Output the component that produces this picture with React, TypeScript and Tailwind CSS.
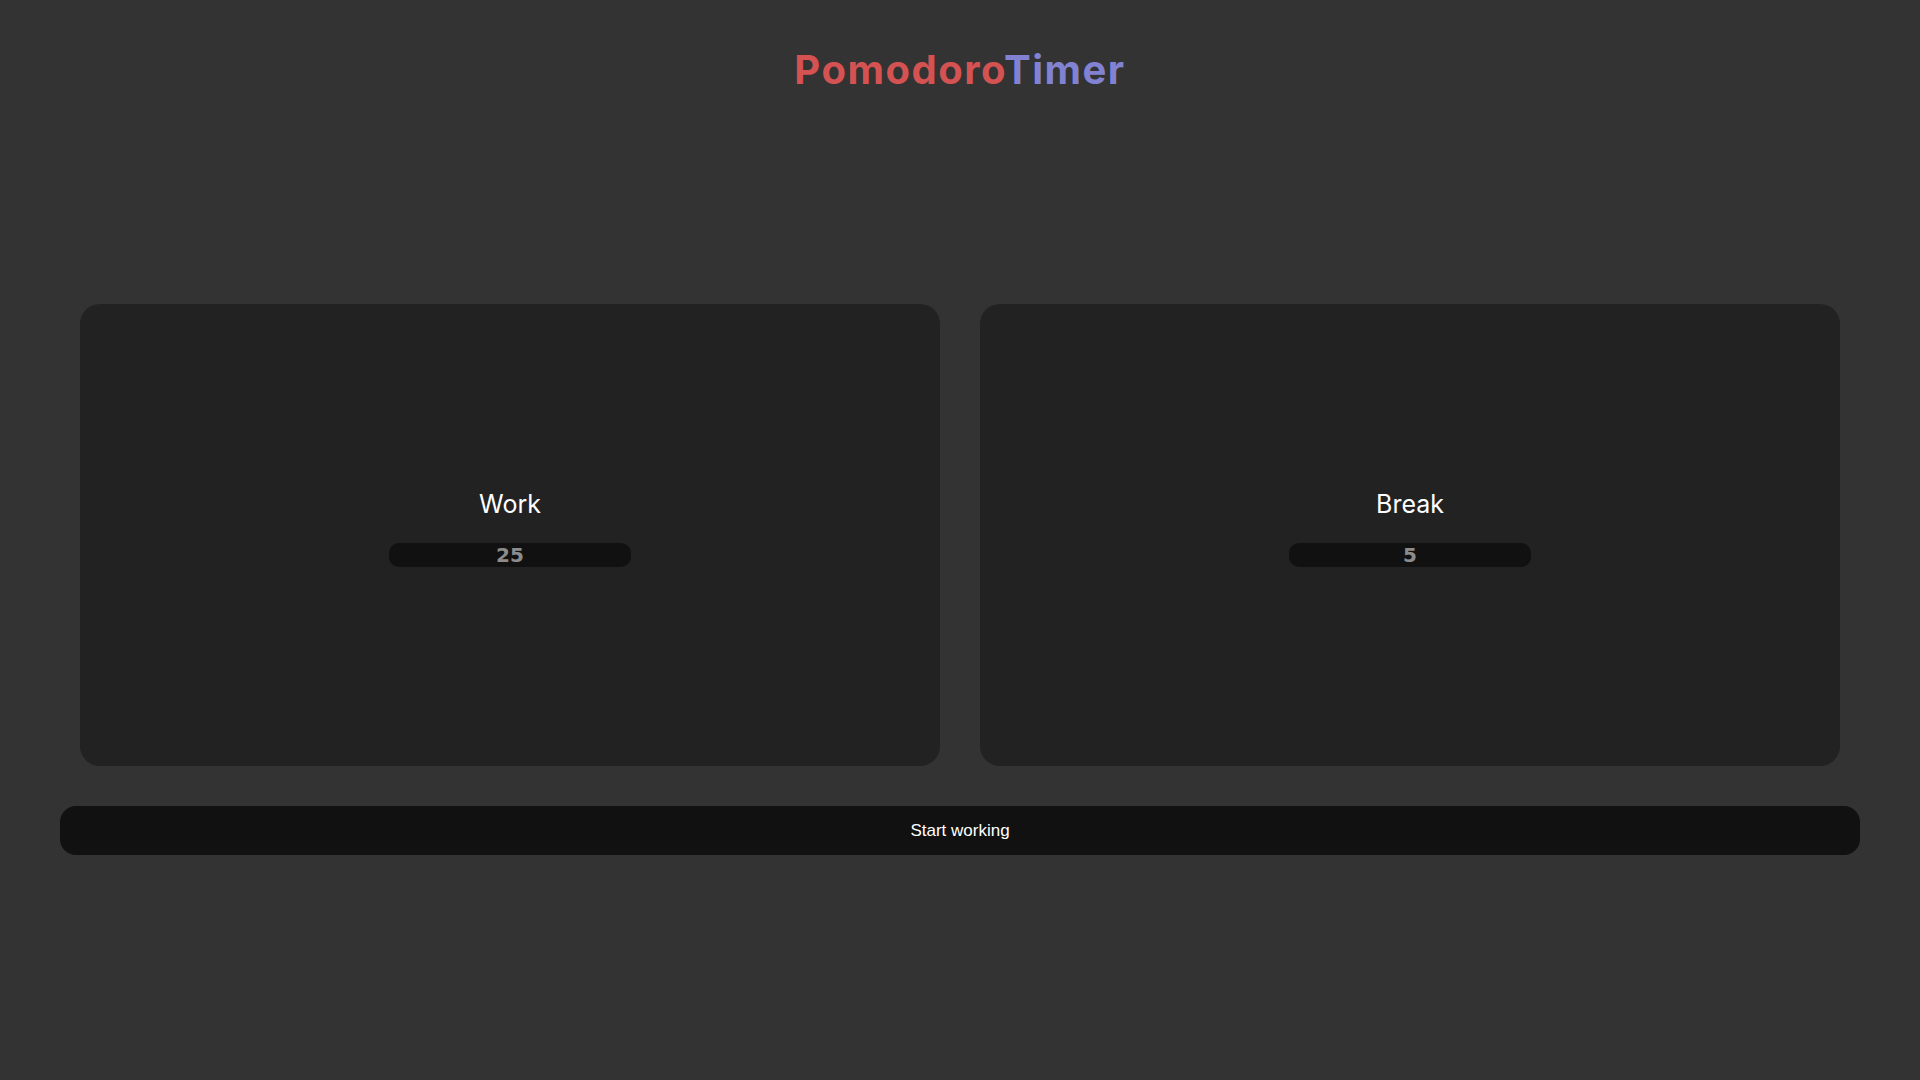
export default function App() {
  return (
    <div className="min-h-screen w-full bg-[#333333]">
      <header className="flex justify-center pt-[41px]">
        <h1 className="font-['Inter',sans-serif] text-[40px] font-bold leading-[58px] tracking-[1.5px]">
          <span className="text-[#d45252]">Pomodoro</span>
          <span className="text-[#8282d2]">Timer</span>
        </h1>
      </header>

      <main className="mt-[205px] px-[60px]">
        <div className="grid grid-cols-2 gap-10 px-5">
          <TimerCard label="Work" value="25" />
          <TimerCard label="Break" value="5" />
        </div>
        <button className="mt-[40px] flex h-[49px] w-full items-center justify-center rounded-[16px] bg-[#111111] font-['Liberation_Sans',sans-serif] text-[17px] text-white">
          Start working
        </button>
      </main>
    </div>
  )
}

function TimerCard({ label, value }: { label: string; value: string }) {
  return (
    <section className="flex h-[462px] flex-col items-center justify-center rounded-[20px] bg-[#222222] pb-[18px]">
      <h2 className="font-['Inter',sans-serif] text-[25px] leading-[36px] text-white">{label}</h2>
      <input
        readOnly
        value={value}
        className="mt-[21px] h-[24px] w-[242px] rounded-[10px] bg-[#111111] text-center font-['DejaVu_Sans',sans-serif] text-[20px] font-bold leading-[24px] text-[#8c8c8c] outline-none"
      />
    </section>
  )
}
